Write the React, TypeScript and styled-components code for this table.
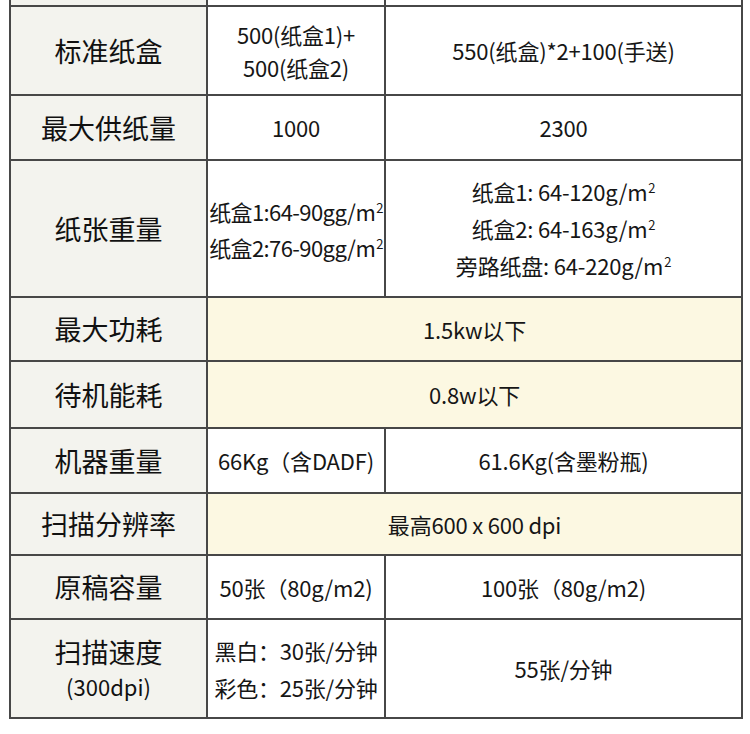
import React from "react";
import styled, { createGlobalStyle } from "styled-components";

const GlobalStyle = createGlobalStyle`
    html, body {
        margin: 0;
        padding: 0;
        background: #ffffff;
    }
    body {
        font-family: "Noto Sans CJK SC", "Noto Sans", sans-serif;
        color: #1b1b1b;
    }
`;

const Sheet = styled.div`
    display: grid;
    grid-template-columns: 195px 176px 1fr;
    gap: 2px;
    width: 734px;
    box-sizing: border-box;
    margin: 0 0 0 9px;
    padding: 0 2px 2px 2px;
    background: #474747;
`;

const Stub = styled.div`
    height: 5px;
    background: #ffffff;
    &:first-child {
        background: #f3f3ee;
    }
`;

type CellProps = {
    h: number;
    span?: number;
    tone?: "white" | "cream";
};

const Cell = styled.div<CellProps>`
    display: flex;
    flex-direction: column;
    align-items: center;
    justify-content: center;
    height: ${(p) => p.h}px;
    grid-column: span ${(p) => p.span || 1};
    white-space: nowrap;
    text-align: center;
`;

const LabelCell = styled(Cell)`
    background: #f3f3ee;
    font-size: 27px;
    font-weight: 400;
    line-height: 32px;
    color: #111111;
`;

const ValueCell = styled(Cell)`
    background: ${(p) => (p.tone === "cream" ? "#fcf8e2" : "#ffffff")};
    font-size: 22px;
    line-height: 33px;
    color: #161616;
    letter-spacing: -0.2px;
`;

const Line = styled.div<{ gap?: number; tight?: boolean }>`
    line-height: ${(p) => p.gap || 33}px;
    letter-spacing: ${(p) => (p.tight ? "-0.6px" : "inherit")};
`;

const SubLabel = styled.div`
    font-size: 22px;
    line-height: 34px;
`;

const Sup = styled.sup`
    font-size: 13px;
    vertical-align: 8px;
    line-height: 0;
    margin-left: 1px;
`;

type Row = {
    label: React.ReactNode;
    height: number;
    left?: React.ReactNode;
    right?: React.ReactNode;
    merged?: React.ReactNode;
};

const getRows = (): Row[] => [
    {
        label: "标准纸盒",
        height: 87,
        left: (
            <>
                <Line>500(纸盒1)+</Line>
                <Line>500(纸盒2)</Line>
            </>
        ),
        right: "550(纸盒)*2+100(手送)",
    },
    { label: "最大供纸量", height: 63, left: "1000", right: "2300" },
    {
        label: "纸张重量",
        height: 135,
        left: (
            <>
                <Line gap={36} tight>纸盒1:64-90gg/m<Sup>2</Sup></Line>
                <Line gap={36} tight>纸盒2:76-90gg/m<Sup>2</Sup></Line>
            </>
        ),
        right: (
            <>
                <Line gap={37}>纸盒1: 64-120g/m<Sup>2</Sup></Line>
                <Line gap={37}>纸盒2: 64-163g/m<Sup>2</Sup></Line>
                <Line gap={37}>旁路纸盘: 64-220g/m<Sup>2</Sup></Line>
            </>
        ),
    },
    { label: "最大功耗", height: 62, merged: "1.5kw以下" },
    { label: "待机能耗", height: 65, merged: "0.8w以下" },
    { label: "机器重量", height: 63, left: "66Kg（含DADF)", right: "61.6Kg(含墨粉瓶)" },
    { label: "扫描分辨率", height: 60, merged: "最高600 x 600 dpi" },
    { label: "原稿容量", height: 62, left: "50张（80g/m2)", right: "100张（80g/m2)" },
    {
        label: (
            <>
                <Line gap={34}>扫描速度</Line>
                <SubLabel>(300dpi)</SubLabel>
            </>
        ),
        height: 97,
        left: (
            <>
                <Line gap={37}>黑白：30张/分钟</Line>
                <Line gap={37}>彩色：25张/分钟</Line>
            </>
        ),
        right: "55张/分钟",
    },
];

export default function App() {
    const rows = getRows();
    return (
        <>
            <GlobalStyle />
            <Sheet>
                <Stub />
                <Stub />
                <Stub />
                {rows.map((row, i) => (
                    <React.Fragment key={i}>
                        <LabelCell h={row.height}>{row.label}</LabelCell>
                        {row.merged ? (
                            <ValueCell h={row.height} span={2} tone="cream">
                                {row.merged}
                            </ValueCell>
                        ) : (
                            <>
                                <ValueCell h={row.height}>{row.left}</ValueCell>
                                <ValueCell h={row.height}>{row.right}</ValueCell>
                            </>
                        )}
                    </React.Fragment>
                ))}
            </Sheet>
        </>
    );
}
